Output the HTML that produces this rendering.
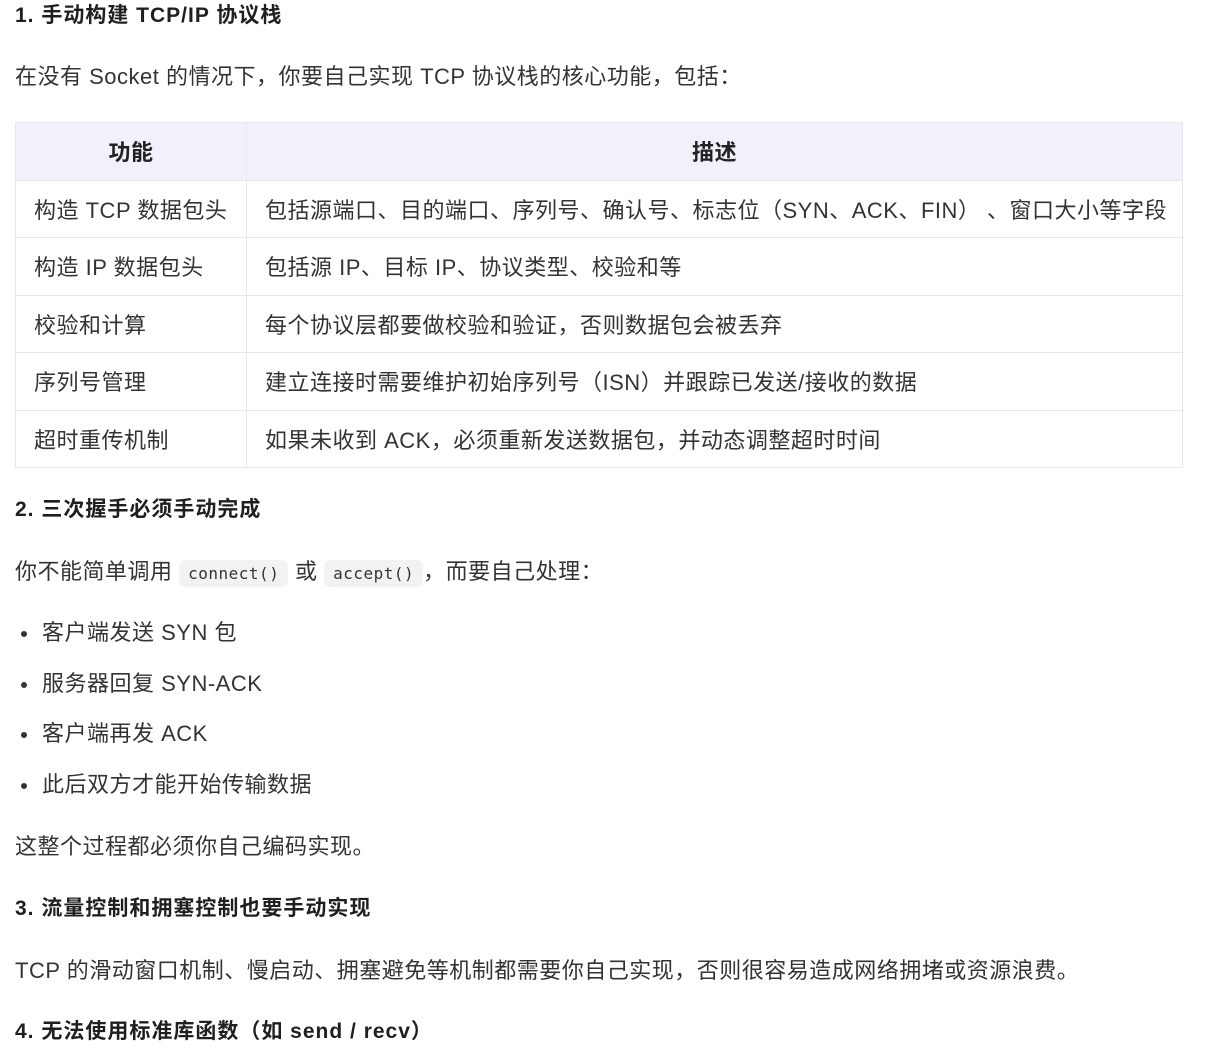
<!DOCTYPE html>
<html><head><meta charset="utf-8"><style>
body{margin:0;width:1225px;height:1049px;background:#fff;overflow:hidden;font-family:"Liberation Sans","Noto Sans CJK SC",sans-serif;color:#333;}
.a{position:absolute;left:15px;white-space:nowrap;line-height:30px;}
.h{font-weight:bold;font-size:21px;letter-spacing:1px;color:#1f1f1f;}
.p{font-size:22px;letter-spacing:0.5px;}
code{font-family:"DejaVu Sans Mono","Liberation Mono",monospace;font-size:16px;letter-spacing:0.5px;background:#f1f2f4;border-radius:7px;padding:4px 9px;color:#333;}
table{position:absolute;left:15px;top:122px;width:1168px;border-collapse:collapse;font-size:22px;letter-spacing:0.5px;table-layout:fixed;}
td,th{border:1px solid #e6e8ef;height:56.5px;padding:0 8px 0 18px;text-align:left;white-space:nowrap;overflow:hidden;}
th{background:#f0f1fb;text-align:center;font-weight:bold;color:#222;padding:0;}
col.c1{width:231px;}
.li{left:42px;}
.li:before{content:"";position:absolute;left:-21px;top:13px;width:6px;height:6px;border-radius:50%;background:#333;}
</style></head><body>
<div class="a h" style="top:1px">1. 手动构建 TCP/IP 协议栈</div>
<div class="a p" style="top:62px">在没有 Socket 的情况下，你要自己实现 TCP 协议栈的核心功能，包括：</div>
<table>
<colgroup><col class="c1"><col></colgroup>
<tr><th>功能</th><th>描述</th></tr>
<tr><td>构造 TCP 数据包头</td><td>包括源端口、目的端口、序列号、确认号、标志位（SYN、ACK、FIN） 、窗口大小等字段</td></tr>
<tr><td>构造 IP 数据包头</td><td>包括源 IP、目标 IP、协议类型、校验和等</td></tr>
<tr><td>校验和计算</td><td>每个协议层都要做校验和验证，否则数据包会被丢弃</td></tr>
<tr><td>序列号管理</td><td>建立连接时需要维护初始序列号（ISN）并跟踪已发送/接收的数据</td></tr>
<tr><td>超时重传机制</td><td>如果未收到 ACK，必须重新发送数据包，并动态调整超时时间</td></tr>
</table>
<div class="a h" style="top:495px">2. 三次握手必须手动完成</div>
<div class="a p" style="top:557px">你不能简单调用 <code>connect()</code> 或 <code>accept()</code>，而要自己处理：</div>
<div class="a p li" style="top:618px">客户端发送 SYN 包</div>
<div class="a p li" style="top:669px">服务器回复 SYN-ACK</div>
<div class="a p li" style="top:719px">客户端再发 ACK</div>
<div class="a p li" style="top:770px">此后双方才能开始传输数据</div>
<div class="a p" style="top:832px">这整个过程都必须你自己编码实现。</div>
<div class="a h" style="top:894px">3. 流量控制和拥塞控制也要手动实现</div>
<div class="a p" style="top:956px">TCP 的滑动窗口机制、慢启动、拥塞避免等机制都需要你自己实现，否则很容易造成网络拥堵或资源浪费。</div>
<div class="a h" style="top:1017px">4. 无法使用标准库函数（如 send / recv）</div>
</body></html>
